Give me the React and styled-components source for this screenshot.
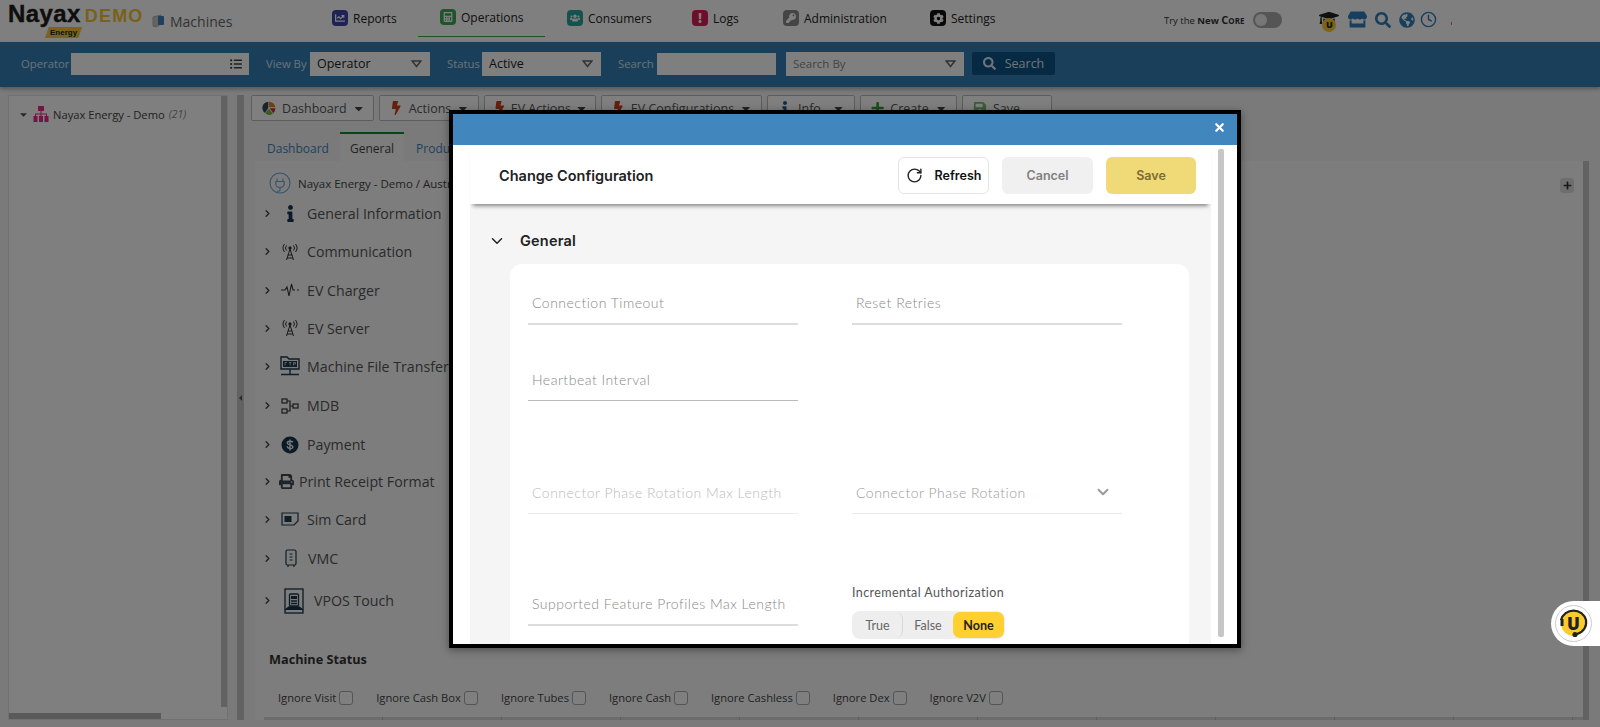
import React from "react";
import styled, { createGlobalStyle } from "styled-components";
import {
  FaInfo,
  FaPrint,
  FaStore,
  FaSearch,
  FaGlobeAmericas,
  FaSave,
  FaPlus,
  FaBolt,
  FaCaretDown,
  FaListUl,
  FaGraduationCap,
  FaChartLine,
  FaUsers,
  FaExclamation,
  FaKey,
  FaCog,
  FaCalculator,
} from "react-icons/fa";
import { ChevronRight, ChevronDown, RotateCw, X, Clock } from "lucide-react";

const GlobalStyle = createGlobalStyle`
  html, body {
    margin: 0;
    height: 100%;
    overflow: hidden;
  }
  body {
    font-family: "Open Sans", "Liberation Sans", sans-serif;
    background: #f5f5f5;
  }
  * { box-sizing: border-box; }
`;

const PieIcon = () => (
  <svg width="16" height="16" viewBox="0 0 20 20">
    <path d="M9 1a9 9 0 0 0-5 16l5-7z" fill="#34495e" />
    <path d="M10 1v8h9a9 9 0 0 0-9-8z" fill="#e67e22" />
    <path d="M19 10.500h-8l5 7a9 9 0 0 0 3-7z" fill="#c0392b" />
    <path d="M4.500 17.500a9 9 0 0 0 11 .5l-5.500-7z" fill="#7cb342" />
  </svg>
);

const TreeOrgIcon = () => (
  <svg width="16" height="16" viewBox="0 0 16 16" fill="#e5298a">
    <rect x="5" y="0" width="6" height="5" />
    <rect x="7.500" y="5" width="1" height="3" />
    <rect x="2" y="7.500" width="12" height="1" />
    <rect x="0.500" y="10" width="4" height="6" />
    <rect x="6" y="10" width="4" height="6" />
    <rect x="11.500" y="10" width="4" height="6" />
    <rect x="2" y="8" width="1" height="2" />
    <rect x="7.500" y="8" width="1" height="2" />
    <rect x="13" y="8" width="1" height="2" />
  </svg>
);

const MachineGlyph = () => (
  <svg width="13" height="15" viewBox="0 0 13 15">
    <path d="M1 3l8-2v9l-5 3-3-1z" fill="#c9c9c9" stroke="#b0b0b0" />
    <rect x="6" y="2" width="6" height="9" rx="1" fill="#3f7fb8" />
  </svg>
);

const PlugIcon = () => (
  <svg width="22" height="22" viewBox="0 0 22 22" fill="none" stroke="#6aa8d8" strokeWidth="1.100">
    <circle cx="11" cy="11" r="10" />
    <path d="M8 6.500v3M14 6.500v3M6.800 9.500h8.400v2.500a4.200 3.500 0 0 1-8.400 0zM11 15.500v2.500c0 1.500-2 1.500-3 1" />
  </svg>
);

const TowerIcon = () => (
  <svg width="16" height="18" viewBox="0 0 16 18" fill="none" stroke="#333" strokeWidth="1">
    <circle cx="8" cy="5" r="1.200" fill="#333" />
    <path d="M8 6l-3.500 11M8 6l3.500 11M5.800 12h4.400M5 15h6" />
    <path d="M4.500 2.500a4 4 0 0 0 0 5M11.500 2.500a4 4 0 0 1 0 5M2.500 1a6.500 6.500 0 0 0 0 8M13.500 1a6.500 6.500 0 0 1 0 8" />
  </svg>
);

const PulseIcon = () => (
  <svg width="18" height="14" viewBox="0 0 18 14" fill="none" stroke="#333" strokeWidth="1.100">
    <path d="M0 7h4l2-3 2 9 2.500-12 1.500 6h2M16 7h2" />
  </svg>
);

const FtpIcon = () => (
  <svg width="20" height="22" viewBox="0 0 20 22" fill="none" stroke="#1f3a4d" strokeWidth="1.400">
    <path d="M1 14V2h6l2 2h10v10z" />
    <rect x="3" y="6" width="14" height="6" fill="#1f3a4d" stroke="none" />
    <path d="M10 14v5M1 19.500h18" />
    <path d="M5 7.500h2M5 7.500v3M9 7.500h2.500M10.200 7.500v3M13.500 10.500v-3h2v1.500h-2" stroke="#ddd" strokeWidth="0.800" />
  </svg>
);

const MdbIcon = () => (
  <svg width="19" height="16" viewBox="0 0 19 16" fill="none" stroke="#333" strokeWidth="1.200">
    <rect x="1" y="1" width="5" height="4" />
    <rect x="1" y="11" width="5" height="4" />
    <rect x="12" y="6" width="5" height="4" />
    <path d="M6 3h3v10H6M9 8h3" />
  </svg>
);

const PayIcon = () => (
  <svg width="18" height="18" viewBox="0 0 18 18">
    <circle cx="9" cy="9" r="8.500" fill="#14344d" />
    <path d="M12 6.200C11 4.900 6.300 4.800 6.300 6.900c0 2.400 5.600 1.500 5.600 4.100 0 2.300-4.800 2.100-6-.6M9 3.500v11" fill="none" stroke="#f5f5f5" strokeWidth="1.400" />
  </svg>
);

const SimIcon = () => (
  <svg width="18" height="14" viewBox="0 0 18 14" fill="none" stroke="#1f3a4d" strokeWidth="1.200">
    <path d="M1 1h16v8l-4 4H1z" />
    <rect x="3.500" y="4" width="7" height="6" fill="#1f3a4d" stroke="none" />
  </svg>
);

const VmcIcon = () => (
  <svg width="12" height="18" viewBox="0 0 12 18" fill="none" stroke="#1f3a4d" strokeWidth="1.200">
    <rect x="1" y="1" width="10" height="15" rx="1.500" />
    <path d="M4.500 5h3M4.500 8h3M4.500 11h3M3 16v2M9 16v2" />
  </svg>
);

const VposIcon = () => (
  <svg width="20" height="26" viewBox="0 0 20 26" fill="none" stroke="#173248" strokeWidth="1.300">
    <rect x="1" y="1" width="18" height="24" />
    <rect x="5.500" y="6" width="9" height="12" rx="1" />
    <rect x="7" y="8" width="6" height="3" fill="#173248" stroke="none" />
    <path d="M7 13h6M7 15.500h6" />
    <path d="M1 22l4-3h10l4 3" fill="#173248" />
  </svg>
);

const SelectCaret = () => (
  <svg width="11" height="8" viewBox="0 0 11 8" fill="none" stroke="#666" strokeWidth="1.500">
    <path d="M1.200 1h8.600L5.500 6.500z" />
  </svg>
);

const HeadsetArc = () => (
  <HelpArc width="37" height="37" viewBox="0 0 37 37" fill="none" stroke="#222" strokeWidth="2.200">
    <path d="M6 15a13 13 0 0 1 25 0c1 6-2 12-9 14" />
    <circle cx="20" cy="29.500" r="1.500" fill="#222" />
    <path d="M7 14v7" strokeWidth="3" />
  </HelpArc>
);

const navItems = [
  { label: "Reports", color: "#3c46a8", width: 108, icon: <FaChartLine size={10} color="#fff" /> },
  { label: "Operations", color: "#3ea654", width: 127, active: true, icon: <FaCalculator size={10} color="#fff" /> },
  { label: "Consumers", color: "#27a59a", width: 125, icon: <FaUsers size={10} color="#fff" /> },
  { label: "Logs", color: "#d81f55", width: 91, icon: <FaExclamation size={10} color="#fff" /> },
  { label: "Administration", color: "#8a8a8a", width: 147, icon: <FaKey size={10} color="#fff" /> },
  { label: "Settings", color: "#111", width: 122, icon: <FaCog size={11} color="#fff" /> },
];

const toolbarItems = [
  { label: "Dashboard", icon: <PieIcon />, width: 123 },
  { label: "Actions", icon: <FaBolt color="#c8401a" size={14} />, width: 100 },
  { label: "EV Actions", icon: <FaBolt color="#c8401a" size={14} />, width: 112 },
  { label: "EV Configurations", icon: <FaBolt color="#c8401a" size={14} />, width: 161 },
  { label: "Info", icon: <FaInfo color="#1d5f92" size={14} />, width: 88 },
  { label: "Create", icon: <FaPlus color="#2e9e2e" size={14} />, width: 97 },
  { label: "Save", icon: <FaSave color="#6cc06c" size={14} />, width: 90, noCaret: true },
];

const treeItems = [
  { label: "General Information", icon: <FaInfo color="#14344d" size={17} />, w: 29, h: 38 },
  { label: "Communication", icon: <TowerIcon />, w: 29, h: 39 },
  { label: "EV Charger", icon: <PulseIcon />, w: 29, h: 38 },
  { label: "EV Server", icon: <TowerIcon />, w: 29, h: 38 },
  { label: "Machine File Transfer", icon: <FtpIcon />, w: 29, h: 38 },
  { label: "MDB", icon: <MdbIcon />, w: 29, h: 41 },
  { label: "Payment", icon: <PayIcon />, w: 29, h: 37 },
  { label: "Print Receipt Format", icon: <FaPrint color="#3d4a55" size={15} />, w: 21, h: 37 },
  { label: "Sim Card", icon: <SimIcon />, w: 29, h: 38 },
  { label: "VMC", icon: <VmcIcon />, w: 30, h: 40 },
  { label: "VPOS Touch", icon: <VposIcon />, w: 36, h: 45 },
];

const statusItems = [
  "Ignore Visit",
  "Ignore Cash Box",
  "Ignore Tubes",
  "Ignore Cash",
  "Ignore Cashless",
  "Ignore Dex",
  "Ignore V2V",
];

const App = () => {
  return (
    <Page>
      <GlobalStyle />
      <TopNav>
        <Brand>
          <LogoBox>
            <LogoTop>
              <LogoName>Nayax</LogoName>
              <LogoDemo>DEMO</LogoDemo>
            </LogoTop>
            <LogoTag>Energy</LogoTag>
          </LogoBox>
          <MachineGlyph />
          <BrandTitle>Machines</BrandTitle>
        </Brand>
        {navItems.map((item) => (
          <NavItem key={item.label} $width={item.width} $active={item.active}>
            <NavIcon $color={item.color}>{item.icon}</NavIcon>
            {item.label}
          </NavItem>
        ))}
        <NavRight>
          <TryText>
            Try the <b>New</b> <CoreWord>Core</CoreWord>
          </TryText>
          <Toggle />
          <CapBadge>
            <FaGraduationCap size={20} color="#222" />
            <CapU>U</CapU>
          </CapBadge>
          <FaStore size={19} color="#2f7cb8" />
          <FaSearch size={16} color="#2f7cb8" />
          <FaGlobeAmericas size={16} color="#2f7cb8" />
          <ClockWrap>
            <Clock size={17} color="#2f7cb8" strokeWidth={2} />
          </ClockWrap>
          <NavDot />
        </NavRight>
      </TopNav>

      <FilterBar>
        <FilterLabel $left={21} $width={50}>Operator</FilterLabel>
        <FilterInput $width={178}>
          <FaListUl size={12} color="#444" />
        </FilterInput>
        <FilterLabel $left={17} $width={44}>View By</FilterLabel>
        <FilterSelect $width={120}>
          Operator
          <SelectCaret />
        </FilterSelect>
        <FilterLabel $left={17} $width={35}>Status</FilterLabel>
        <FilterSelect $width={119}>
          Active
          <SelectCaret />
        </FilterSelect>
        <FilterLabel $left={17} $width={39}>Search</FilterLabel>
        <FilterInput $width={119} />
        <FilterSelect $width={178} $left={10} $muted>
          Search By
          <SelectCaret />
        </FilterSelect>
        <SearchButton>
          <FaSearch size={13} />
          Search
        </SearchButton>
      </FilterBar>

      <Body>
        <SidePanel>
          <TreeRoot>
            <FaCaretDown size={11} color="#555" />
            <TreeOrgIcon />
            Nayax Energy - Demo <TreeCount>(21)</TreeCount>
          </TreeRoot>
          <SideScrollV />
          <SideScrollH />
        </SidePanel>
        <Splitter>
          <SplitterArrow />
        </Splitter>
        <Main>
          <Toolbar>
            {toolbarItems.map((item) => (
              <ToolButton key={item.label} $width={item.width}>
                {item.icon}
                <ToolLabel>{item.label}</ToolLabel>
                {!item.noCaret && <FaCaretDown size={13} color="#444" />}
              </ToolButton>
            ))}
          </Toolbar>
          <Tabs>
            <Tab>Dashboard</Tab>
            <Tab $active>General</Tab>
            <Tab>Products</Tab>
          </Tabs>
          <Panel>
            <PlusButton>
              <FaPlus size={9} color="#333" />
            </PlusButton>
            <PanelScroll />
            <Breadcrumb>
              <PlugIcon />
              Nayax Energy - Demo / Australia
            </Breadcrumb>
            {treeItems.map((item) => (
              <TreeRow key={item.label} $height={item.h}>
                <TreeChevron>
                  <ChevronRight size={11} strokeWidth={3} color="#444" />
                </TreeChevron>
                <TreeIcon $width={item.w}>{item.icon}</TreeIcon>
                {item.label}
              </TreeRow>
            ))}
            <StatusTitle>Machine Status</StatusTitle>
            <StatusRow>
              {statusItems.map((label) => (
                <StatusItem key={label}>
                  {label}
                  <StatusBox />
                </StatusItem>
              ))}
            </StatusRow>
            <GridHead>
              {Array.from({ length: 11 }).map((_, i) => (
                <GridCell key={i}>
                  <GridDot />
                </GridCell>
              ))}
            </GridHead>
          </Panel>
        </Main>
      </Body>

      <Overlay />

      <Modal>
        <ModalBar>
          <X size={13} strokeWidth={4} color="#fff" />
        </ModalBar>
        <ModalBody>
          <ModalContent>
            <ModalHeader>
              <ModalTitle>Change Configuration</ModalTitle>
              <RefreshButton>
                <RotateCw size={17} strokeWidth={2} color="#222" />
                Refresh
              </RefreshButton>
              <CancelButton>Cancel</CancelButton>
              <SaveButton>Save</SaveButton>
            </ModalHeader>
            <SectionTitle>
              <ChevronDown size={18} strokeWidth={2} color="#222" />
              General
            </SectionTitle>
            <Card>
              <FieldRow>
                <Field>Connection Timeout</Field>
                <Field>Reset Retries</Field>
              </FieldRow>
              <FieldRow $top={36}>
                <Field $dark>Heartbeat Interval</Field>
              </FieldRow>
              <FieldRow $top={73}>
                <Field $disabled>Connector Phase Rotation Max Length</Field>
                <Field $disabled $strong>
                  Connector Phase Rotation
                  <ChevronDown size={18} strokeWidth={2.500} color="#999" />
                </Field>
              </FieldRow>
              <FieldRow $top={72}>
                <Field>Supported Feature Profiles Max Length</Field>
                <ToggleField>
                  <ToggleLabel>Incremental Authorization</ToggleLabel>
                  <Segments>
                    <Segment $divider>True</Segment>
                    <Segment>False</Segment>
                    <Segment $active>None</Segment>
                  </Segments>
                </ToggleField>
              </FieldRow>
            </Card>
          </ModalContent>
          <ModalScroll />
        </ModalBody>
      </Modal>

      <HelpTab>
        <HelpRing>
          <HeadsetArc />
          <HelpFace>U</HelpFace>
        </HelpRing>
      </HelpTab>
    </Page>
  );
};

export default App;

const Page = styled.div`
  position: relative;
  width: 1600px;
  height: 727px;
  overflow: hidden;
  background: #f5f5f5;
  color: #333;
`;

const TopNav = styled.div`
  height: 42px;
  display: flex;
  align-items: center;
  background: #fff;
  font-size: 13px;
`;

const Brand = styled.div`
  width: 310px;
  padding-left: 8px;
  display: flex;
  align-items: center;
  gap: 5px;
`;

const LogoBox = styled.div`
  width: 139px;
  margin-top: -1px;
  display: flex;
  flex-direction: column;
`;

const LogoTop = styled.div`
  display: flex;
  align-items: baseline;
  gap: 4px;
  height: 22px;
`;

const LogoName = styled.span`
  font: 700 24px/22px "Liberation Sans", sans-serif;
  letter-spacing: 0.400px;
  -webkit-text-stroke: 0.400px #1c1c1c;
  color: #1c1c1c;
`;

const LogoDemo = styled.span`
  font: 700 18px/22px "Liberation Sans", sans-serif;
  letter-spacing: 1.200px;
  color: #f2c230;
`;

const LogoTag = styled.span`
  align-self: flex-start;
  margin: 2px 0 0 37px;
  padding: 0 5px;
  height: 11px;
  font: 700 8px/11px "Liberation Sans", sans-serif;
  color: #222;
  background: #f7c933;
  clip-path: polygon(10% 0, 100% 0, 90% 100%, 0 100%);
`;

const BrandTitle = styled.span`
  font-size: 14px;
  color: #666;
`;

const NavItem = styled.div`
  width: ${(p) => p.$width}px;
  height: 36px;
  margin-top: ${(p) => (p.$active ? "-5px" : "-3px")};
  padding: 0 0 2px 22px;
  display: flex;
  align-items: center;
  gap: 5px;
  color: #222;
  font-size: 12px;
  border-bottom: ${(p) => (p.$active ? "1px solid #3ea654" : "1px solid transparent")};
`;

const NavIcon = styled.span`
  width: 16px;
  height: 16px;
  display: flex;
  align-items: center;
  justify-content: center;
  border-radius: 4px;
  background: ${(p) => p.$color};
`;

const NavRight = styled.div`
  margin: -3px 0 0 134px;
  display: flex;
  align-items: center;
  gap: 8px;
`;

const TryText = styled.span`
  font-size: 9.500px;
  color: #333;
  white-space: nowrap;
`;

const CoreWord = styled.b`
  font-variant: small-caps;
  font-size: 11px;
`;

const Toggle = styled.span`
  width: 29px;
  height: 16px;
  margin-left: 1px;
  margin-right: 29px;
  border-radius: 8px;
  background: #aaa;
  display: flex;
  padding: 2px;

  &::before {
    content: "";
    width: 12px;
    height: 12px;
    border-radius: 50%;
    background: #eee;
  }
`;

const CapBadge = styled.span`
  position: relative;
  width: 20px;
  height: 22px;
  margin-right: 1px;
  margin-top: -2px;
`;

const CapU = styled.span`
  position: absolute;
  left: 3px;
  top: 10px;
  width: 14px;
  height: 14px;
  border-radius: 50%;
  background: #f7c933;
  color: #222;
  font: 800 9px/14px "Open Sans", sans-serif;
  text-align: center;
`;

const ClockWrap = styled.span`
  display: flex;
  margin-left: -3px;
`;

const NavDot = styled.span`
  width: 1px;
  height: 3px;
  margin: 8px 0 0 6px;
  background: #e0702a;
`;

const FilterBar = styled.div`
  height: 45px;
  padding-bottom: 2px;
  display: flex;
  align-items: center;
  background: #347fb5;
  box-shadow: 0 2px 4px rgba(0, 0, 0, 0.3);
  font-size: 12px;
`;

const FilterLabel = styled.span`
  width: ${(p) => p.$width}px;
  margin-left: ${(p) => p.$left}px;
  color: #d5e3ee;
  font-size: 11.300px;
  white-space: nowrap;
`;

const FilterInput = styled.div`
  width: ${(p) => p.$width}px;
  height: 22px;
  padding-right: 7px;
  display: flex;
  align-items: center;
  justify-content: flex-end;
  background: #fff;
`;

const FilterSelect = styled.div`
  width: ${(p) => p.$width}px;
  height: 24px;
  margin-left: ${(p) => p.$left || 0}px;
  padding: 0 8px 0 7px;
  display: flex;
  align-items: center;
  justify-content: space-between;
  background: #fff;
  color: ${(p) => (p.$muted ? "#888" : "#222")};
  font-size: ${(p) => (p.$muted ? "11.500px" : "12.500px")};
`;

const SearchButton = styled.div`
  width: 83px;
  height: 23px;
  margin-left: 8px;
  display: flex;
  align-items: center;
  justify-content: center;
  gap: 9px;
  background: #0d5486;
  border-radius: 2px;
  color: #dfe9f1;
  font-size: 12.500px;
`;

const Body = styled.div`
  height: 640px;
  display: flex;
  padding: 8px 0 7px 8px;
`;

const SidePanel = styled.div`
  position: relative;
  width: 220px;
  background: #fff;
  border: 1px solid #e2e2e2;
`;

const TreeRoot = styled.div`
  padding: 10px 0 0 9px;
  display: flex;
  align-items: center;
  gap: 4px;
  font-size: 11.200px;
  color: #444;
`;

const TreeCount = styled.i`
  color: #888;
  font-size: 10.500px;
`;

const SideScrollV = styled.div`
  position: absolute;
  top: 0;
  right: 0;
  bottom: 12px;
  width: 6px;
  background: #c4c4c4;
`;

const SideScrollH = styled.div`
  position: absolute;
  left: 0;
  bottom: 0;
  width: 152px;
  height: 6px;
  background: #b4b4b4;
`;

const Splitter = styled.div`
  width: 7px;
  margin: 0 7px 0 9px;
  background: #c4c4c4;
  display: flex;
  align-items: flex-start;
  justify-content: center;
  padding-top: 300px;
`;

const SplitterArrow = styled.span`
  width: 0;
  height: 0;
  border-top: 3px solid transparent;
  border-bottom: 3px solid transparent;
  border-right: 3px solid #555;
`;

const Main = styled.div`
  flex: 1;
  min-width: 0;
  display: flex;
  flex-direction: column;
`;

const Toolbar = styled.div`
  height: 26px;
  flex-shrink: 0;
  display: flex;
  gap: 5px;
`;

const ToolButton = styled.div`
  width: ${(p) => p.$width}px;
  padding: 0 9px 0 10px;
  display: flex;
  align-items: center;
  gap: 6px;
  background: #fff;
  border: 1px solid #bbb;
  border-radius: 2px;
  font-size: 12.500px;
  color: #555;
`;

const ToolLabel = styled.span`
  flex: 1;
  white-space: nowrap;
`;

const Tabs = styled.div`
  height: 29px;
  flex-shrink: 0;
  margin-top: 11px;
  padding-left: 4px;
  display: flex;
`;

const Tab = styled.div`
  padding: ${(p) => (p.$active ? "2px 10px 0" : "2px 11px 0 12px")};
  display: flex;
  align-items: center;
  font-size: 12px;
  color: ${(p) => (p.$active ? "#444" : "#3d84bd")};
  background: ${(p) => (p.$active ? "#fbfbfb" : "transparent")};
  border-top: 2px solid ${(p) => (p.$active ? "#0d8a2e" : "transparent")};
`;

const Panel = styled.div`
  position: relative;
  flex: 1;
  min-height: 0;
  margin: 0 11px 0 4px;
  overflow: hidden;
  background: #fbfbfb;
  display: flex;
  flex-direction: column;
`;

const PlusButton = styled.span`
  position: absolute;
  top: 17px;
  right: 15px;
  width: 14px;
  height: 15px;
  display: flex;
  align-items: center;
  justify-content: center;
  background: #ddd;
  border-radius: 3px;
`;

const PanelScroll = styled.span`
  position: absolute;
  top: 0;
  right: 0;
  bottom: 0;
  width: 6px;
  background: #c4c4c4;
`;

const Breadcrumb = styled.div`
  height: 33px;
  flex-shrink: 0;
  padding: 11px 0 0 14px;
  display: flex;
  align-items: center;
  gap: 7px;
  font-size: 11.500px;
  color: #444;
`;

const TreeRow = styled.div`
  height: ${(p) => p.$height}px;
  flex-shrink: 0;
  display: flex;
  align-items: center;
  font-size: 14.200px;
  color: #555;
`;

const TreeChevron = styled.span`
  width: 23px;
  padding-left: 7px;
  display: flex;
`;

const TreeIcon = styled.span`
  width: ${(p) => p.$width}px;
  padding-right: 5px;
  display: flex;
  justify-content: center;
`;

const StatusTitle = styled.div`
  margin: 27px 0 0 14px;
  font-size: 12.700px;
  font-weight: 700;
  color: #333;
`;

const StatusRow = styled.div`
  margin: 22px 0 0 23px;
  display: flex;
  gap: 23px;
`;

const StatusItem = styled.div`
  display: flex;
  align-items: center;
  gap: 3px;
  font-size: 11.200px;
  color: #444;
`;

const StatusBox = styled.span`
  width: 14px;
  height: 14px;
  border: 1px solid #aaa;
  border-radius: 3px;
  background: #fff;
`;

const GridHead = styled.div`
  height: 8px;
  flex-shrink: 0;
  margin: 12px 0 0 9px;
  display: flex;
  background: #d8d8d8;
`;

const GridCell = styled.div`
  width: 119px;
  padding-right: 9px;
  display: flex;
  align-items: center;
  justify-content: flex-end;
  border-right: 1px solid #bbb;
`;

const GridDot = styled.span`
  width: 2px;
  height: 2px;
  background: #333;
`;

const Overlay = styled.div`
  position: absolute;
  inset: 0;
  background: rgba(0, 0, 0, 0.5);
`;

const Modal = styled.div`
  position: absolute;
  left: 449px;
  top: 110px;
  width: 792px;
  height: 538px;
  border: 4px solid #000;
  background: #fff;
  display: flex;
  flex-direction: column;
  box-shadow: 0 2px 8px rgba(0, 0, 0, 0.4);
`;

const ModalBar = styled.div`
  height: 31px;
  flex-shrink: 0;
  padding: 7px 11px 0 0;
  display: flex;
  justify-content: flex-end;
  align-items: flex-start;
  background: #4187bd;
`;

const ModalBody = styled.div`
  flex: 1;
  min-height: 0;
  display: flex;
  padding-left: 17px;
`;

const ModalContent = styled.div`
  width: 741px;
  display: flex;
  flex-direction: column;
  background: #f5f5f5;
  font-family: Lato, "Liberation Sans", sans-serif;
`;

const ModalScroll = styled.div`
  width: 6px;
  height: 488px;
  margin: 4px 0 0 7px;
  border-radius: 2px;
  background: #c6c6c6;
`;

const ModalHeader = styled.div`
  height: 59px;
  flex-shrink: 0;
  padding: 2px 15px 0 29px;
  display: flex;
  align-items: center;
  gap: 13px;
  background: #fff;
  box-shadow: 0 5px 4px -3px rgba(0, 0, 0, 0.45);
`;

const ModalTitle = styled.div`
  flex: 1;
  font: 600 14.500px Inter, sans-serif;
  color: #222;
`;

const ActionButton = styled.div`
  width: 91px;
  height: 37px;
  display: flex;
  align-items: center;
  justify-content: center;
  border-radius: 6px;
  font: 600 12.500px Inter, sans-serif;
`;

const RefreshButton = styled(ActionButton)`
  gap: 12px;
  background: #fff;
  border: 1px solid #e4e4e4;
  color: #111;
`;

const CancelButton = styled(ActionButton)`
  background: #f0f0f0;
  color: #808080;
`;

const SaveButton = styled(ActionButton)`
  width: 90px;
  background: #f0da78;
  color: #7d6c35;
`;

const SectionTitle = styled.div`
  height: 60px;
  flex-shrink: 0;
  padding-left: 18px;
  padding-top: 13px;
  display: flex;
  align-items: center;
  gap: 14px;
  font: 600 14.500px Inter, sans-serif;
  letter-spacing: 0.200px;
  color: #222;
`;

const Card = styled.div`
  flex: 1;
  min-height: 0;
  margin: 0 22px 0 40px;
  padding: 21px 0 0 18px;
  overflow: hidden;
  background: #fff;
  border-radius: 12px 12px 0 0;
`;

const FieldRow = styled.div`
  margin-top: ${(p) => p.$top || 0}px;
  display: flex;
  align-items: flex-start;
  gap: 54px;
`;

const Field = styled.div`
  width: 270px;
  height: 40px;
  padding: 0 10px 3px 4px;
  display: flex;
  align-items: center;
  justify-content: space-between;
  border-bottom: ${(p) => (p.$dark ? "1px solid #bbb" : p.$disabled ? "1px solid #ebebeb" : "2px solid #ddd")};
  font-size: 14px;
  letter-spacing: 0.500px;
  font-weight: 300;
  color: ${(p) => (p.$strong ? "#999" : p.$disabled ? "#bbb" : "#888")};
  white-space: nowrap;
`;

const ToggleField = styled.div`
  width: 270px;
`;

const ToggleLabel = styled.div`
  margin-bottom: 12px;
  font-size: 12.500px;
  letter-spacing: 0.400px;
  color: #555;
  line-height: 13px;
`;

const Segments = styled.div`
  width: 153px;
  height: 28px;
  padding: 1px;
  display: flex;
  align-items: center;
  background: #eee;
  border-radius: 8px;
`;

const Segment = styled.div`
  width: ${(p) => (p.$active ? "51px" : "50px")};
  height: 26px;
  display: flex;
  align-items: center;
  justify-content: center;
  font-size: 12.500px;
  font-weight: ${(p) => (p.$active ? 700 : 400)};
  color: ${(p) => (p.$active ? "#222" : "#666")};
  background: ${(p) => (p.$active ? "#ffd02f" : "transparent")};
  border-radius: 7px;
  border-right: ${(p) => (p.$divider ? "1px solid #d8d8d8" : "none")};
`;

const HelpTab = styled.div`
  position: absolute;
  left: 1551px;
  top: 601px;
  width: 49px;
  height: 45px;
  padding: 4px 0 0 4px;
  background: #fff;
  border-radius: 23px 0 0 23px;
`;

const HelpRing = styled.div`
  position: relative;
  width: 37px;
  height: 37px;
  border: 1px solid #ccc;
  border-radius: 50%;
  padding: 5px;
`;

const HelpArc = styled.svg`
  position: absolute;
  left: -1px;
  top: -1px;
`;

const HelpFace = styled.div`
  width: 25px;
  height: 25px;
  border-radius: 50%;
  background: #fbcb2d;
  color: #222;
  text-align: center;
  font: 800 17px/25px "Open Sans", sans-serif;
`;
